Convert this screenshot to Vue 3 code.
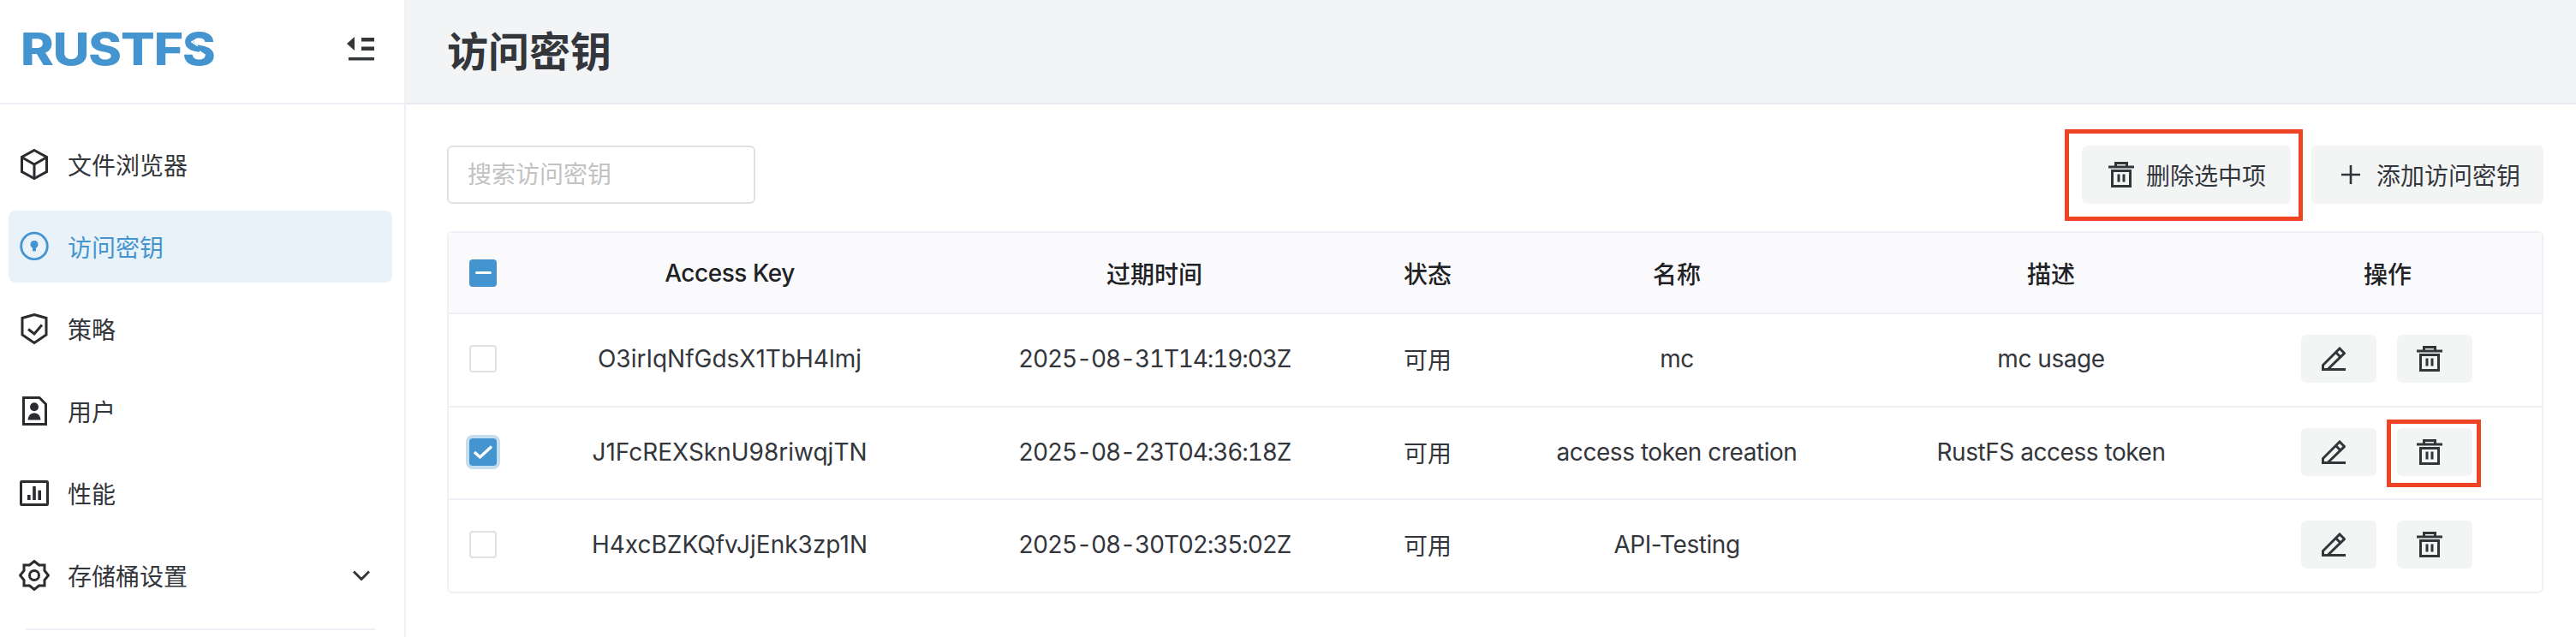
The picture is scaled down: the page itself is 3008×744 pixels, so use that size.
<script setup>
const menu = [
  { label: '文件浏览器', icon: 'cube' },
  { label: '访问密钥', icon: 'key', active: true },
  { label: '策略', icon: 'shield' },
  { label: '用户', icon: 'user' },
  { label: '性能', icon: 'chart' },
  { label: '存储桶设置', icon: 'gear', chevron: true }
]
const rows = [
  { key: 'O3irIqNfGdsX1TbH4lmj', exp: '2025-08-31T14:19:03Z', name: 'mc', desc: 'mc usage' },
  { key: 'J1FcREXSknU98riwqjTN', exp: '2025-08-23T04:36:18Z', name: 'access token creation', desc: 'RustFS access token', checked: true, marked: true },
  { key: 'H4xcBZKQfvJjEnk3zp1N', exp: '2025-08-30T02:35:02Z', name: 'API-Testing', desc: '' }
]
</script>

<template>
  <div class="page">
    <aside class="side">
      <div class="brand">
        <span class="logo">RUSTFS</span>
        <svg class="notch" viewBox="0 0 60 50" fill="none" stroke="#fff" stroke-width="1.600">
          <path d="M31 13 24 17l7 4.500M33 28l6 4-6 4" />
        </svg>
        <svg class="collapse" viewBox="0 0 32 32" fill="#333639">
          <path d="M9 2v16L0 10z" />
          <rect x="17" y="3" width="15" height="4.500" />
          <rect x="17" y="13.500" width="15" height="4.500" />
          <rect x="2" y="26" width="30" height="3.500" />
        </svg>
      </div>
      <nav class="menu">
        <div v-for="m in menu" :key="m.label" class="item" :class="{ active: m.active }">
          <svg class="mi" viewBox="0 0 36 36" fill="none" stroke="currentColor" stroke-width="3">
            <template v-if="m.icon === 'cube'">
              <path d="M18 1.500 32.500 9.500v17L18 34.500l-14.500-8v-17z" />
              <path d="M4 10l14 8 14-8M18 18v16" />
            </template>
            <template v-else-if="m.icon === 'key'">
              <circle cx="18" cy="17.500" r="15.300" stroke-width="2.800" />
              <circle cx="18" cy="15.500" r="4.500" fill="currentColor" stroke="none" />
              <rect x="16" y="16" width="4" height="7.500" rx="1" fill="currentColor" stroke="none" />
            </template>
            <template v-else-if="m.icon === 'shield'">
              <path d="M18 1.500 32 5.500V25L18 34.500 4 25V5.500z" />
              <path d="m11 18.500 7 5.500 9-10.500" />
            </template>
            <template v-else-if="m.icon === 'user'">
              <path d="M5.500 2.500H24l7.500 7.500v23.500h-26z" />
              <circle cx="18" cy="13.300" r="5" fill="currentColor" stroke="none" />
              <path d="M10.500 28.500c.5-5.500 3.500-8 7.500-8s7 2.500 7.500 8z" fill="currentColor" stroke="none" />
            </template>
            <template v-else-if="m.icon === 'chart'">
              <rect x="2.500" y="4.500" width="31" height="27" rx="1" />
              <rect x="10" y="20" width="3.600" height="6" fill="currentColor" stroke="none" />
              <rect x="16.200" y="10" width="3.600" height="16" fill="currentColor" stroke="none" />
              <rect x="22.400" y="14.700" width="3.600" height="11.300" fill="currentColor" stroke="none" />
            </template>
            <template v-else>
              <path d="M18 1.500 23.500 6H30v6.500l4.500 5.500-4.500 5.500V30h-6.500L18 34.500 12.500 30H6v-6.500L1.500 18 6 12.500V6h6.500z" />
              <circle cx="18" cy="18" r="5.500" />
            </template>
          </svg>
          <span class="label">{{ m.label }}</span>
          <svg v-if="m.chevron" class="chev" viewBox="0 0 20 12" fill="none" stroke="#333639" stroke-width="3">
            <path d="m1 1.500 9 9 9-9" />
          </svg>
        </div>
      </nav>
      <div class="rule"></div>
    </aside>

    <main class="main">
      <header class="top"><h1>访问密钥</h1></header>
      <section class="body">
        <div class="tools">
          <div class="search">搜索访问密钥</div>
          <div class="btns">
            <button class="btn del marked-lg">
              <svg class="aic" viewBox="0 0 30 30" fill="none" stroke="#333639" stroke-width="3">
                <path d="M0 6h30M8.500 5V1.500h13V5M4.500 10.500h21v18h-21z" />
                <path d="M12 14.500v9M18 14.500v9" />
              </svg>
              删除选中项
            </button>
            <button class="btn add">
              <svg class="plus" viewBox="0 0 22 22" fill="none" stroke="#333639" stroke-width="2.600">
                <path d="M11 0v22M0 11h22" />
              </svg>
              添加访问密钥
            </button>
          </div>
        </div>

        <div class="table">
          <div class="row head">
            <div class="cell check"><span class="cb on minus"><i></i></span></div>
            <div class="cell tight">Access Key</div>
            <div class="cell">过期时间</div>
            <div class="cell">状态</div>
            <div class="cell">名称</div>
            <div class="cell">描述</div>
            <div class="cell">操作</div>
          </div>
          <div v-for="r in rows" :key="r.key" class="row">
            <div class="cell check">
              <span class="cb" :class="{ on: r.checked, focus: r.checked }">
                <svg v-if="r.checked" viewBox="0 0 32 32" fill="none" stroke="#fff" stroke-width="3.400">
                  <path d="m6 16 6.500 6L26 9.500" />
                </svg>
              </span>
            </div>
            <div class="cell">{{ r.key }}</div>
            <div class="cell date">{{ r.exp }}</div>
            <div class="cell">可用</div>
            <div class="cell tight">{{ r.name }}</div>
            <div class="cell tight">{{ r.desc }}</div>
            <div class="cell acts">
              <button class="act">
                <svg class="pen" viewBox="0 0 28 28" fill="none" stroke="#333639" stroke-width="3">
                  <path d="M0 26.500h28M7 26.500H1.500v-5L21 2l5.500 5.500z" />
                  <path d="M16.500 6.500l5.500 5.500" />
                </svg>
              </button>
              <button class="act" :class="{ marked: r.marked }">
                <svg class="aic" viewBox="0 0 30 30" fill="none" stroke="#333639" stroke-width="3">
                  <path d="M0 6h30M8.500 5V1.500h13V5M4.500 10.500h21v18h-21z" />
                  <path d="M12 14.500v9M18 14.500v9" />
                </svg>
              </button>
            </div>
          </div>
        </div>
      </section>
    </main>
  </div>
</template>

<style>
html, body { margin: 0; background: #fff; overflow: hidden; }
</style>

<style scoped>
.page {
  display: flex;
  width: 3008px;
  height: 744px;
  overflow: hidden;
  font-family: Inter, "Noto Sans CJK SC", sans-serif;
  font-size: 28px;
  color: #33363b;
}
.side {
  width: 474px;
  flex: none;
  box-sizing: border-box;
  border-right: 2px solid #eff0f5;
}
.brand {
  position: relative;
  height: 122px;
  box-sizing: border-box;
  border-bottom: 2px solid #eff0f5;
  padding: 0 35px 0 24px;
  display: flex;
  align-items: center;
  justify-content: space-between;
}
.logo {
  font-family: Inter, sans-serif;
  font-weight: 800;
  font-size: 52px;
  line-height: 38px;
  letter-spacing: -1px;
  color: #4394cf;
  margin-top: -4px;
  transform: scaleX(1.13);
  transform-origin: left center;
}
.notch { position: absolute; left: 200px; top: 32px; width: 60px; height: 50px; }
.collapse { width: 32px; height: 32px; margin-top: -6px; }
.menu {
  display: flex;
  flex-direction: column;
  gap: 12px;
  padding: 28px 14px 0 10px;
}
.item {
  height: 84px;
  display: flex;
  align-items: center;
  padding: 0 26px 0 12px;
  border-radius: 8px;
  color: #33363b;
}
.item.active { background: #eaf2f9; color: #4394cf; }
.mi { width: 36px; height: 36px; flex: none; color: #2a2c30; }
.active .mi { color: #4394cf; }
.label { margin-left: 21px; flex: 1; }
.chev { width: 20px; height: 12px; }
.rule { height: 2px; background: #eff0f5; margin: 20px 34px 0 30px; }

.main { flex: 1; min-width: 0; }
.top {
  height: 122px;
  box-sizing: border-box;
  background: #f3f4f6;
  border-bottom: 2px solid #e8eaef;
  padding: 0 0 7px 48px;
  display: flex;
  align-items: center;
}
h1 { margin: 0; font-size: 48px; font-weight: 700; color: #33363b; }
.body { padding: 48px 38px 0 48px; }
.tools {
  display: flex;
  justify-content: space-between;
  height: 68px;
}
.search {
  width: 360px;
  box-sizing: border-box;
  border: 2px solid #e0e0e6;
  border-radius: 6px;
  padding-left: 22px;
  line-height: 64px;
  color: #c2c2c2;
}
.btns { display: flex; gap: 24px; }
button { font: inherit; color: inherit; border: 0; padding: 0; }
.btn {
  display: flex;
  align-items: center;
  height: 68px;
  border-radius: 6px;
  background: #f3f5f5;
  position: relative;
}
.del { width: 244px; padding-left: 31px; gap: 14px; }
.add { width: 271px; padding-left: 35px; gap: 19px; }
.plus { width: 22px; height: 22px; flex: none; }
.marked-lg::after {
  content: "";
  position: absolute;
  left: -20px; right: -14px; top: -19px; bottom: -20px;
  border: 5px solid #ee4423;
  pointer-events: none;
}
.table {
  margin-top: 32px;
  width: 2448px;
  box-sizing: border-box;
  border: 2px solid #eff0f5;
  border-radius: 6px;
}
.row {
  display: grid;
  grid-template-columns: 84px 488px 504px 134px 448px 426px 360px;
  height: 108.5px;
  box-sizing: border-box;
  border-top: 2px solid #eff0f5;
  padding-bottom: 2px;
}
.row.head { height: 93px; border-top: 0; padding-bottom: 0; background: #fafafc; font-weight: 500; color: #1f2225; }
.cell { display: flex; align-items: center; justify-content: center; }
.check { padding-right: 4px; }
.tight { letter-spacing: -0.45px; }
.date { font-variant-numeric: tabular-nums; letter-spacing: -1.15px; }
.cb {
  width: 32px; height: 32px;
  box-sizing: border-box;
  border: 2px solid #e0e0e6;
  border-radius: 4px;
  background: #fff;
  display: flex;
  align-items: center;
  justify-content: center;
}
.cb.on { background: #4394cf; border-color: #4394cf; }
.cb.focus { box-shadow: 0 0 0 4px #c2deef; }
.cb svg { width: 32px; height: 32px; flex: none; }
.cb i { display: block; width: 19px; height: 3px; background: #fff; border-radius: 2px; }
.acts { gap: 24px; padding-right: 2px; }
.act {
  width: 88px; height: 56px;
  border-radius: 6px;
  background: #f3f5f5;
  display: flex;
  align-items: center;
  justify-content: center;
  position: relative;
}
.aic { width: 30px; height: 30px; flex: none; }
.act .aic { margin-left: -12px; }
.pen { width: 28px; height: 28px; margin-left: -12px; }
.marked::after {
  content: "";
  position: absolute;
  left: -12px; right: -10px; top: -10px; bottom: -13px;
  border: 5px solid #ee4423;
  pointer-events: none;
}
</style>
